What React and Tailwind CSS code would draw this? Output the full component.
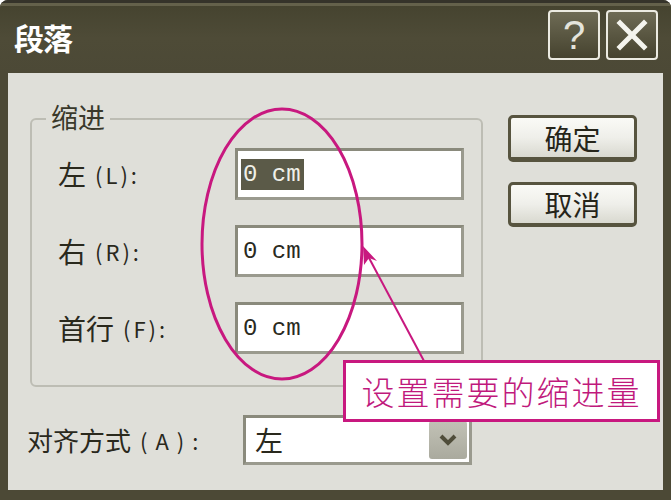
import React from "react";

const CJK = "font-['Noto_Sans_CJK_SC',sans-serif]";

function TitleButton({ children }) {
  return (
    <div className="w-[52px] h-[50px] rounded-[4px] border-2 border-[#ecebe2] bg-gradient-to-b from-[#6e6b55] to-[#46432f] flex items-center justify-center">
      {children}
    </div>
  );
}

function TextBox({ selected }) {
  return (
    <div className="w-[229px] h-[52px] border-[3px] border-[#8a8a7c] border-b-[#9a9a8e] border-r-[#9a9a8e] bg-white flex items-center pl-[3px]">
      <span
        className={`font-['Liberation_Mono',monospace] text-[24px] leading-[31px] whitespace-pre pl-[2px] pr-[3px] ${
          selected ? "bg-[#5b5a48] text-[#f0f0e8]" : "text-[#2a2a1e]"
        }`}
      >
        {"0 cm"}
      </span>
    </div>
  );
}

function DlgButton({ label, isDefault }) {
  return (
    <div
      className={`w-[129px] rounded-[5px] border-[#57543f] bg-gradient-to-b from-[#fafaf6] via-[#efefea] to-[#d9d9d0] flex items-center justify-center ${
        isDefault ? "h-[47px] border-[3px] border-b-[5px]" : "h-[45px] border-[3px] border-b-[4px]"
      }`}
    >
      <span className={`${CJK} text-[28px] leading-none text-[#26251a]`}>{label}</span>
    </div>
  );
}

export default function App() {
  const rows = [
    { label: "左", key: "(L):", selected: true },
    { label: "右", key: "(R):" },
    { label: "首行", key: "(F):" },
  ];

  return (
    <div className="relative w-[671px] h-[500px] overflow-hidden rounded-t-[8px] bg-[#4c4936] flex flex-col">
      {/* title bar */}
      <div className="h-[73px] flex items-center justify-between pl-[14px] pr-[13px] bg-gradient-to-b from-[#45432f] via-[#4e4b37] to-[#4c4936] border-t-[3px] border-[#35332a] shadow-[inset_0_3px_0_#64614b]">
        <span className={`${CJK} text-[30px] font-bold leading-none text-white tracking-[-1px] -mt-[3px]`}>段落</span>
        <div className="flex gap-[6px] -mt-[6px]">
          <TitleButton>
            <span className="font-['Liberation_Sans',sans-serif] text-[40px] leading-none text-[#e4e4dc]">?</span>
          </TitleButton>
          <TitleButton>
            <svg width="34" height="34" viewBox="0 0 34 34">
              <path d="M5 5 L29 29 M29 5 L5 29" stroke="#f4f4ee" strokeWidth="5" strokeLinecap="square" />
            </svg>
          </TitleButton>
        </div>
      </div>

      {/* body */}
      <div className="mx-[8px] h-[417px] bg-[#dfdfd9] pt-[42px]">
        <div className="flex items-start ml-[22px] gap-[25px]">
          {/* group box */}
          <div className="relative mt-[3px] w-[453px] h-[269px] rounded-[6px] border-2 border-[#bdbdb4] pt-[28px] pl-[26px]">
            <span className={`absolute -top-[17px] left-[14px] px-[5px] bg-[#dfdfd9] ${CJK} text-[27px] leading-[28px] text-[#3a392b]`}>
              缩进
            </span>
            <div className="flex flex-col gap-[25px]">
              {rows.map((r) => (
                <div key={r.key} className="flex items-center">
                  <div className={`w-[177px] flex items-center ${CJK} text-[28px] leading-none text-[#2a291d]`}>
                    <span>{r.label}</span>
                    <span className="ml-[9px] text-[22px] tracking-[3px]">{r.key}</span>
                  </div>
                  <TextBox selected={r.selected} />
                </div>
              ))}
            </div>
          </div>

          {/* buttons */}
          <div className="flex flex-col gap-[20px]">
            <DlgButton label="确定" isDefault />
            <DlgButton label="取消" />
          </div>
        </div>

        {/* alignment row */}
        <div className="flex items-center ml-[19px] mt-[28px]">
          <div className={`w-[216px] flex items-center ${CJK} text-[26px] leading-none text-[#2a291d]`}>
            <span>对齐方式</span>
            <span className="ml-[9px] text-[22px] tracking-[8px]">(A):</span>
          </div>
          <div className="w-[229px] h-[50px] border-[3px] border-[#8a8a7c] border-b-[#9a9a8e] border-r-[#9a9a8e] bg-white flex items-center justify-between pl-[9px] pr-[2px]">
            <span className={`${CJK} text-[28px] leading-none text-[#2a291d]`}>左</span>
            <div className="w-[38px] h-[38px] rounded-[3px] bg-gradient-to-b from-[#c2c2b6] to-[#aaaa9e] flex items-center justify-center">
              <svg width="18" height="12" viewBox="0 0 18 12">
                <path d="M2 2 L9 9 L16 2" stroke="#4f4d3a" strokeWidth="4" fill="none" />
              </svg>
            </div>
          </div>
        </div>
      </div>

      {/* annotation overlay */}
      <svg className="absolute inset-0 pointer-events-none" width="671" height="500" viewBox="0 0 671 500">
        <ellipse cx="282" cy="244" rx="80" ry="135" fill="none" stroke="#c8187f" strokeWidth="3" />
        <line x1="424" y1="361" x2="368" y2="256" stroke="#c8187f" strokeWidth="2" />
        <path d="M363 246 L377 261 L369 258 L364 265 Z" fill="#c8187f" />
      </svg>
      <div className="absolute left-[343px] top-[360px] w-[317px] h-[62px] border-[3px] border-[#c8187f] bg-white flex items-center justify-center">
        <span className={`${CJK} text-[33px] font-light leading-none text-[#c0197c] tracking-[2px]`}>设置需要的缩进量</span>
      </div>
    </div>
  );
}
